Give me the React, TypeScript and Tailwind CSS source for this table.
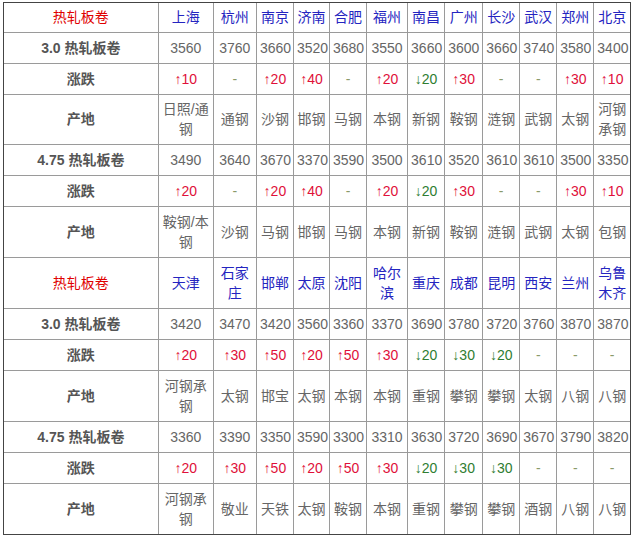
import React from 'react';

type Block = {
  cities: string[];
  rows: { label: string; prices: string[]; changes: string[]; origins: string[] }[];
};

const BLOCKS: Block[] = [
  {
    cities: ['上海', '杭州', '南京', '济南', '合肥', '福州', '南昌', '广州', '长沙', '武汉', '郑州', '北京'],
    rows: [
      {
        label: '3.0',
        prices: ['3560', '3760', '3660', '3520', '3680', '3550', '3660', '3600', '3660', '3740', '3580', '3400'],
        changes: ['+10', '-', '+20', '+40', '-', '+20', 'd20', '+30', '-', '-', '+30', '+10'],
        origins: ['日照/通钢', '通钢', '沙钢', '邯钢', '马钢', '本钢', '新钢', '鞍钢', '涟钢', '武钢', '太钢', '河钢承钢'],
      },
      {
        label: '4.75',
        prices: ['3490', '3640', '3670', '3370', '3590', '3500', '3610', '3520', '3610', '3610', '3500', '3350'],
        changes: ['+20', '-', '+20', '+40', '-', '+20', 'd20', '+30', '-', '-', '+30', '+10'],
        origins: ['鞍钢/本钢', '沙钢', '马钢', '邯钢', '马钢', '本钢', '新钢', '鞍钢', '涟钢', '武钢', '太钢', '包钢'],
      },
    ],
  },
  {
    cities: ['天津', '石家庄', '邯郸', '太原', '沈阳', '哈尔滨', '重庆', '成都', '昆明', '西安', '兰州', '乌鲁木齐'],
    rows: [
      {
        label: '3.0',
        prices: ['3420', '3470', '3420', '3560', '3360', '3370', '3690', '3780', '3720', '3760', '3870', '3870'],
        changes: ['+20', '+30', '+50', '+20', '+50', '+30', 'd20', 'd30', 'd20', '-', '-', '-'],
        origins: ['河钢承钢', '太钢', '邯宝', '太钢', '本钢', '本钢', '重钢', '攀钢', '攀钢', '太钢', '八钢', '八钢'],
      },
      {
        label: '4.75',
        prices: ['3360', '3390', '3350', '3590', '3300', '3310', '3630', '3720', '3690', '3670', '3790', '3820'],
        changes: ['+20', '+30', '+50', '+20', '+50', '+30', 'd20', 'd30', 'd30', '-', '-', '-'],
        origins: ['河钢承钢', '敬业', '天铁', '太钢', '鞍钢', '本钢', '重钢', '攀钢', '攀钢', '酒钢', '八钢', '八钢'],
      },
    ],
  },
];

const COLS = [154, 55, 43, 37, 36, 37, 41, 37, 38, 37, 37, 37, 36];

const td = 'border border-[#9a9a9a] px-[3px] py-0 text-center align-middle leading-[20px]';
const label = `${td} font-bold text-[#555]`;

function Change({ v }: { v: string }) {
  if (v === '-') return <span className="text-[#8a9a6a]">-</span>;
  if (v.startsWith('d')) return <span className="text-[#2f7d32]">↓{v.slice(1)}</span>;
  return <span className="text-[#e0103a]">↑{v.slice(1)}</span>;
}

export default function App() {
  return (
    <div className="bg-white w-[633px] h-[541px] pt-[2px] pl-[3px] font-['Liberation_Sans','Noto_Sans_CJK_SC',sans-serif] text-[14px]">
      <div className="w-[628px] border border-[#444]">
        <table className="w-[626px] table-fixed border-collapse border-hidden">
          <colgroup>
            {COLS.map((w, i) => (
              <col key={i} style={{ width: w }} />
            ))}
          </colgroup>
          <tbody>
            {BLOCKS.map((b, bi) => (
              <React.Fragment key={bi}>
                <tr className={bi === 0 ? 'h-[29px]' : 'h-[51px]'}>
                  <td className={`${td} text-[#e00000]`}>热轧板卷</td>
                  {b.cities.map((c) => (
                    <td key={c} className={`${td} text-[#2424c0]`}>{c}</td>
                  ))}
                </tr>
                {b.rows.map((r, ri) => (
                  <React.Fragment key={r.label}>
                    <tr className="h-[31px]">
                      <td className={label}>{r.label} 热轧板卷</td>
                      {r.prices.map((p, i) => (
                        <td key={i} className={`${td} text-[#666]`}>{p}</td>
                      ))}
                    </tr>
                    <tr className="h-[31px]">
                      <td className={label}>涨跌</td>
                      {r.changes.map((c, i) => (
                        <td key={i} className={td}><Change v={c} /></td>
                      ))}
                    </tr>
                    <tr className={bi === 0 && ri === 0 ? 'h-[50px]' : 'h-[51px]'}>
                      <td className={label}>产地</td>
                      {r.origins.map((o, i) => (
                        <td key={i} className={`${td} text-[#666]`}>{o}</td>
                      ))}
                    </tr>
                  </React.Fragment>
                ))}
              </React.Fragment>
            ))}
          </tbody>
        </table>
      </div>
    </div>
  );
}
